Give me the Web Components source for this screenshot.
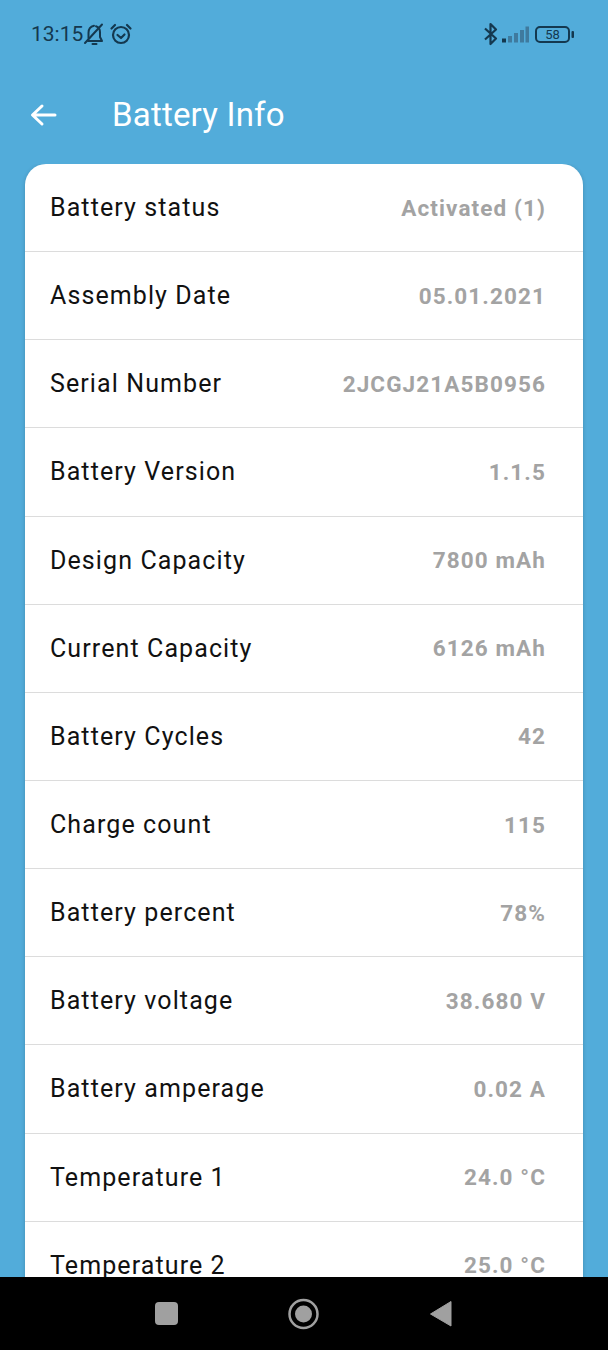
<!DOCTYPE html>
<html>
<head>
<meta charset="utf-8">
<title>Battery Info</title>
<style>
    html,body{ margin:0; height:100%; overflow:hidden; background:#52acda; font-family:Roboto,sans-serif; }
</style>
</head>
<body>
<battery-app>
    <status-bar slot="status" time="13:15" level="58"></status-bar>
    <app-bar slot="bar" title="Battery Info"></app-bar>
    <info-card>
        <info-row label="Battery status" value="Activated (1)"></info-row>
        <info-row label="Assembly Date" value="05.01.2021"></info-row>
        <info-row label="Serial Number" value="2JCGJ21A5B0956"></info-row>
        <info-row label="Battery Version" value="1.1.5"></info-row>
        <info-row label="Design Capacity" value="7800 mAh"></info-row>
        <info-row label="Current Capacity" value="6126 mAh"></info-row>
        <info-row label="Battery Cycles" value="42"></info-row>
        <info-row label="Charge count" value="115"></info-row>
        <info-row label="Battery percent" value="78%"></info-row>
        <info-row label="Battery voltage" value="38.680 V"></info-row>
        <info-row label="Battery amperage" value="0.02 A"></info-row>
        <info-row label="Temperature 1" value="24.0 °C"></info-row>
        <info-row label="Temperature 2" value="25.0 °C"></info-row>
    </info-card>
    <nav-buttons slot="nav"></nav-buttons>
</battery-app>
<script>
class BatteryApp extends HTMLElement{
    constructor(){
        super();
        this.attachShadow({mode:'open'});
    }
    connectedCallback(){
        this.shadowRoot.innerHTML = /*html*/ `
        <style>
            :host{ display:flex; flex-direction:column; height:1350px; background:#52acda; }
            .content{ flex:1; min-height:0; overflow:hidden; padding:0 25px; }
        </style>
        <slot name="status"></slot>
        <slot name="bar"></slot>
        <div class="content"><slot></slot></div>
        <slot name="nav"></slot>
        `;
    }
}
class StatusBar extends HTMLElement{
    constructor(){
        super();
        this.attachShadow({mode:'open'});
    }
    connectedCallback(){
        this.shadowRoot.innerHTML = /*html*/ `
        <style>
            :host{ display:flex; align-items:center; justify-content:space-between; height:68px; padding:0 34px 0 31px; color:#14384f; font-size:21px; box-sizing:border-box; }
            .side{ display:flex; align-items:center; }
            svg{ display:block; }
            .bell{ margin-left:-1px; }
            .alarm{ margin-left:3px; }
            .signal{ margin-left:2px; }
            .batt{ position:relative; margin-left:6px; width:39px; height:17px; }
            .batt span{ position:absolute; left:0; right:4px; top:0; text-align:center; font-size:13px; line-height:17px; }
        </style>
        <div class="side">
            <span>${this.getAttribute('time')}</span>
            <svg class="bell" width="24" height="24" viewBox="0 0 24 24" fill="none" stroke="currentColor" stroke-width="2" stroke-linecap="round" stroke-linejoin="round">
                <path d="M6.5 16V11c0-3.5 2-6.5 5.5-7.2M14 4.2c2.500.8 4 3 4 6V15l2 4H6"/>
                <path d="M3 21 20 2.500"/>
                <path d="M10.500 22h4"/>
            </svg>
            <svg class="alarm" width="24" height="24" viewBox="0 0 24 24" fill="none" stroke="currentColor" stroke-width="2.200" stroke-linecap="round" stroke-linejoin="round">
                <circle cx="12" cy="13" r="8"/>
                <path d="M8.500 13l3.500 3 3.500-3.500"/>
                <path d="M2.500 6.500 6 3M21.500 6.500 18 3"/>
            </svg>
        </div>
        <div class="side">
            <svg width="16" height="24" viewBox="0 0 16 24" fill="none" stroke="currentColor" stroke-width="2.200" stroke-linejoin="round">
                <path d="M2 6.500 13 16.500 7.500 22V2L13 7.500 2 17.500"/>
            </svg>
            <svg class="signal" width="28" height="20" viewBox="0 0 28 20">
                <rect x="1" y="14.500" width="4" height="4" fill="#14384f"/>
                <rect x="7" y="12" width="4" height="6.500" fill="#3f7a9e"/>
                <rect x="13" y="9" width="4" height="9.500" fill="#3f7a9e"/>
                <rect x="19" y="6" width="4" height="12.500" fill="#3f7a9e"/>
                <rect x="24.500" y="2.500" width="3.500" height="16" fill="#3f7a9e"/>
            </svg>
            <div class="batt">
                <svg width="39" height="17" viewBox="0 0 39 17" fill="none">
                    <rect x="1" y="1" width="33" height="15" rx="4" stroke="#14384f" stroke-width="2"/>
                    <rect x="36.500" y="5" width="2.500" height="7" rx="1" fill="#14384f"/>
                </svg>
                <span>${this.getAttribute('level')}</span>
            </div>
        </div>
        `;
    }
}
class AppBar extends HTMLElement{
    constructor(){
        super();
        this.attachShadow({mode:'open'});
    }
    connectedCallback(){
        this.shadowRoot.innerHTML = /*html*/ `
        <style>
            :host{ display:flex; align-items:center; height:96px; padding:0 0 0 30px; box-sizing:border-box; color:#fff; margin-bottom:0; }
            svg{ display:block; width:27px; height:24px; margin-bottom:3px; }
            h1{ margin:0 0 3px 55px; font-size:33px; font-weight:400; letter-spacing:.2px; }
        </style>
        <svg viewBox="0 0 27 24" fill="none" stroke="currentColor" stroke-width="3" stroke-linecap="round" stroke-linejoin="round">
            <path d="M25 12H3M12 3 2.500 12 12 21"/>
        </svg>
        <h1>${this.getAttribute('title')}</h1>
        `;
    }
}
class InfoCard extends HTMLElement{
    constructor(){
        super();
        this.attachShadow({mode:'open'});
    }
    connectedCallback(){
        this.shadowRoot.innerHTML = /*html*/ `
        <style>
            :host{ display:block; background:#fff; border-radius:21px; box-shadow:0 1px 4px rgba(0,0,0,.18); }
        </style>
        <slot></slot>
        `;
    }
}
class InfoRow extends HTMLElement{
    constructor(){
        super();
        this.attachShadow({mode:'open'});
    }
    connectedCallback(){
        this.shadowRoot.innerHTML = /*html*/ `
        <style>
            :host{ display:flex; align-items:center; justify-content:space-between; height:88.15px; box-sizing:border-box; padding:0 37px 0 25px; border-bottom:1px solid #dcdcdc; }
            .label{ font-size:25px; color:#111; letter-spacing:1.1px; }
            .value{ font-size:22.5px; font-weight:700; color:#a3a3a3; letter-spacing:1.1px; }
        </style>
        <span class="label">${this.getAttribute('label')}</span>
        <span class="value">${this.getAttribute('value')}</span>
        `;
    }
}
class NavButtons extends HTMLElement{
    constructor(){
        super();
        this.attachShadow({mode:'open'});
    }
    connectedCallback(){
        this.shadowRoot.innerHTML = /*html*/ `
        <style>
            :host{ display:block; height:73px; background:#000; }
            svg{ display:block; width:100%; height:73px; }
        </style>
        <svg viewBox="0 0 608 73">
            <rect x="155" y="25" width="23" height="23" rx="4" fill="#a0a0a0"/>
            <circle cx="303.500" cy="37" r="14" fill="none" stroke="#a0a0a0" stroke-width="2.500"/>
            <circle cx="303.500" cy="37" r="8.500" fill="#a0a0a0"/>
            <path d="M451 24.500V49L430.500 37Z" fill="#a0a0a0" stroke="#a0a0a0" stroke-linejoin="round"/>
        </svg>
        `;
    }
}
customElements.define("battery-app", BatteryApp);
customElements.define("status-bar", StatusBar);
customElements.define("app-bar", AppBar);
customElements.define("info-card", InfoCard);
customElements.define("info-row", InfoRow);
customElements.define("nav-buttons", NavButtons);
</script>
</body>
</html>
